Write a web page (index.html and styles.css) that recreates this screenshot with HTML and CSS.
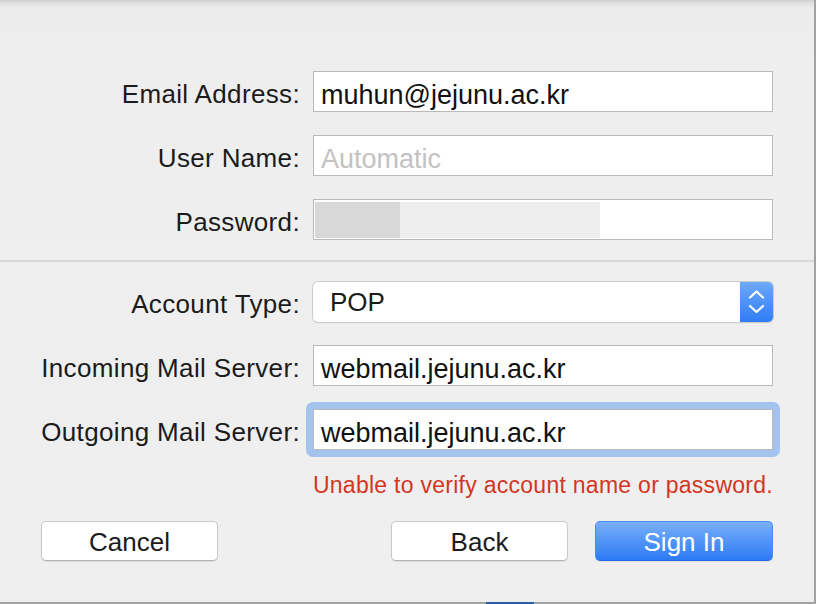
FILE: index.html
```html
<!DOCTYPE html>
<html lang="en">
<head>
<meta charset="utf-8">
<title>Add Account</title>
<link rel="stylesheet" href="styles.css">
</head>
<body>
<div class="window">
  <form class="form">
    <div class="grid section-a">
      <label class="label">Email Address:</label>
      <div class="field">muhun@jejunu.ac.kr</div>
      <label class="label">User Name:</label>
      <div class="field placeholder">Automatic</div>
      <label class="label">Password:</label>
      <div class="field password"><span class="redact dark"></span><span class="redact light"></span></div>
    </div>
    <div class="separator"></div>
    <div class="grid section-b">
      <label class="label">Account Type:</label>
      <div class="popup">
        <span class="popup-value">POP</span>
        <span class="stepper">
          <svg width="33" height="40" viewBox="0 0 33 40" aria-hidden="true">
            <path d="M10 15.5 L16.5 9.5 L23 15.5" fill="none" stroke="#fff" stroke-width="2.2" stroke-linecap="round" stroke-linejoin="round"/>
            <path d="M10 24 L16.5 30 L23 24" fill="none" stroke="#fff" stroke-width="2.2" stroke-linecap="round" stroke-linejoin="round"/>
          </svg>
        </span>
      </div>
      <label class="label">Incoming Mail Server:</label>
      <div class="field">webmail.jejunu.ac.kr</div>
      <label class="label">Outgoing Mail Server:</label>
      <div class="focus-ring"><div class="field">webmail.jejunu.ac.kr</div></div>
    </div>
    <p class="error">Unable to verify account name or password.</p>
    <div class="buttons">
      <button type="button" class="btn">Cancel</button>
      <span class="spacer"></span>
      <button type="button" class="btn">Back</button>
      <button type="button" class="btn primary">Sign In</button>
    </div>
  </form>
</div>
<div class="dock-peek"></div>
</body>
</html>
```
FILE: styles.css
```css
html, body {
  margin: 0;
  padding: 0;
}
body {
  width: 816px;
  height: 604px;
  background: #a2a2a2;
  font-family: "Liberation Sans", Arial, sans-serif;
  color: #1b1b1b;
  overflow: hidden;
  position: relative;
}
.window {
  width: 814px;
  height: 602px;
  box-sizing: border-box;
  padding-top: 71px;
  background: linear-gradient(to bottom, #d0d0d0 0, #e2e2e2 4px, #ececec 8px, #eeeeee 60px, #efefef 100%);
}
.grid {
  display: grid;
  grid-template-columns: 1fr 460px;
  column-gap: 13px;
  row-gap: 23px;
  padding: 0 41px;
}
.label {
  font-size: 26px;
  letter-spacing: 0.35px;
  text-align: right;
  align-self: center;
  padding-top: 5px;
  white-space: nowrap;
  color: #1b1b1b;
}
.field {
  height: 41px;
  box-sizing: border-box;
  background: #fff;
  border: 1px solid #b9b9b9;
  padding: 8px 7px 0;
  font-size: 27px;
  line-height: 33px;
  color: #111;
  display: flex;
  align-items: center;
}
.placeholder {
  color: #c2c2c2;
}
.password {
  padding: 2px 1px 1px 1px;
  align-items: stretch;
}
.redact {
  display: block;
}
.redact.dark {
  width: 85px;
  background: #d8d8d8;
}
.redact.light {
  width: 200px;
  background: #ededed;
}
.separator {
  height: 2px;
  background: #d9d9d9;
  margin-top: 20px;
}
.section-b {
  margin-top: 20px;
}
.popup {
  height: 40px;
  box-sizing: border-box;
  display: flex;
  align-items: stretch;
  background: #fff;
  border-radius: 5px;
  box-shadow: 0 0 0 1px #cbcbcb, 0 1px 1px rgba(0,0,0,0.18);
  overflow: hidden;
}
.popup-value {
  flex: 1;
  font-size: 26px;
  line-height: 40px;
  padding-left: 17px;
  color: #1b1b1b;
}
.stepper {
  width: 33px;
  background: linear-gradient(to bottom, #6ea9f8, #2f7cf6);
  display: flex;
}
.stepper svg {
  display: block;
}
.focus-ring {
  margin: -7px;
  padding: 7px;
  border-radius: 7px;
  background: #a4c3ef;
}
.error {
  margin: 22px 41px 0 0;
  font-size: 23px;
  letter-spacing: 0.27px;
  line-height: 26px;
  text-align: right;
  color: #d3361f;
}
.buttons {
  display: flex;
  align-items: center;
  gap: 27px;
  padding: 0 41px;
  margin-top: 23px;
}
.spacer {
  flex: 1;
}
.btn {
  width: 177px;
  height: 40px;
  box-sizing: border-box;
  margin: 0;
  padding: 2px 0 0;
  font-family: "Liberation Sans", Arial, sans-serif;
  font-size: 26px;
  color: #1b1b1b;
  background: #fff;
  border: 1px solid #c9c9c9;
  border-bottom-color: #b2b2b2;
  border-radius: 5px;
  box-shadow: 0 1px 1px rgba(0,0,0,0.08);
}
.btn.primary {
  width: 178px;
  color: #fff;
  background: linear-gradient(to bottom, #78b0f8, #2c7af6);
  border-color: #4a8cf2;
  border-bottom-color: #2466e6;
}
.dock-peek {
  position: absolute;
  left: 486px;
  top: 602px;
  width: 48px;
  height: 2px;
  background: #2d5ea8;
}
```
